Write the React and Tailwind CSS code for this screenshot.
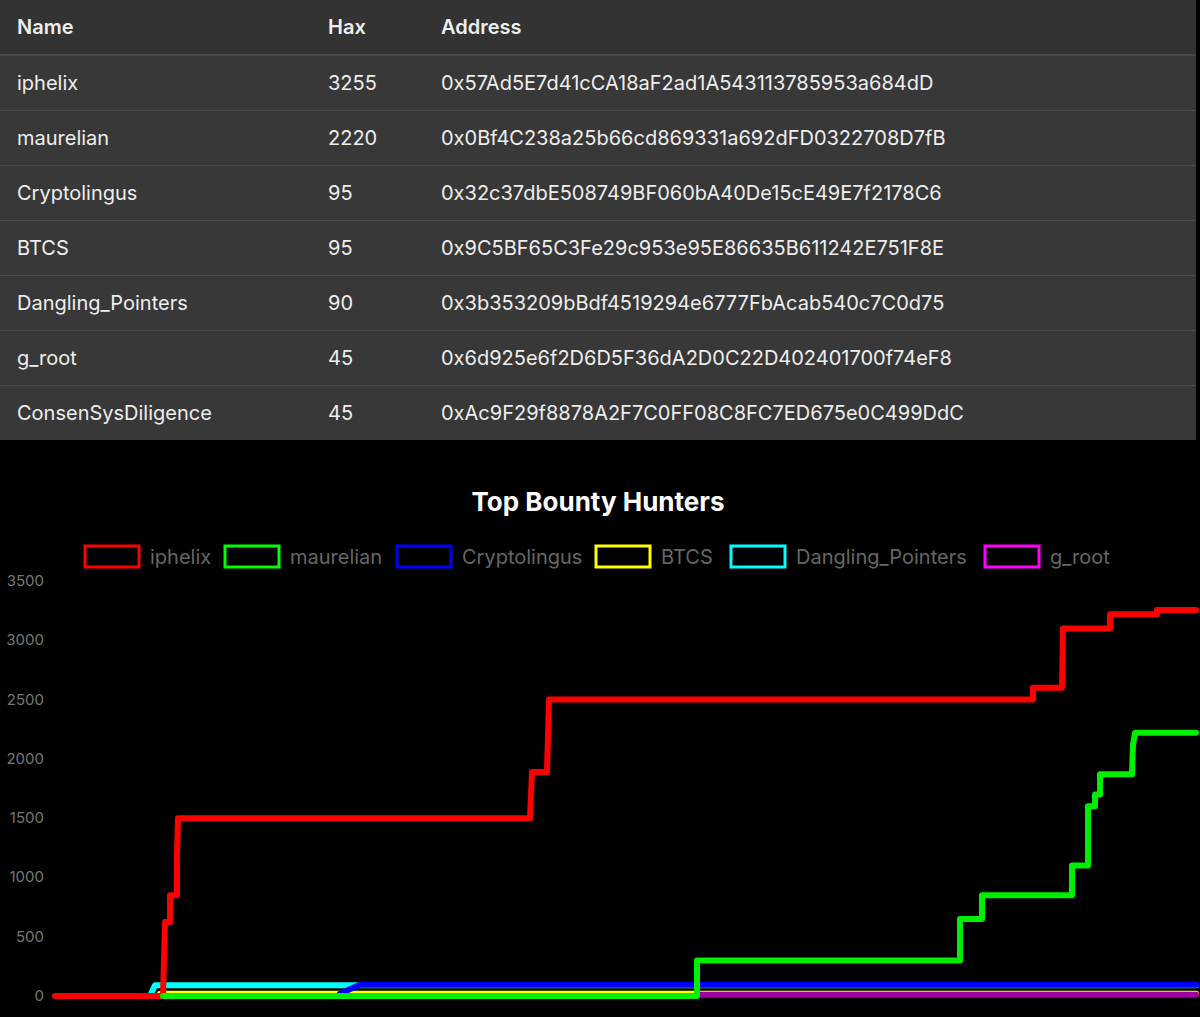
const ROWS = [
  ['iphelix', '3255', '0x57Ad5E7d41cCA18aF2ad1A543113785953a684dD'],
  ['maurelian', '2220', '0x0Bf4C238a25b66cd869331a692dFD0322708D7fB'],
  ['Cryptolingus', '95', '0x32c37dbE508749BF060bA40De15cE49E7f2178C6'],
  ['BTCS', '95', '0x9C5BF65C3Fe29c953e95E86635B611242E751F8E'],
  ['Dangling_Pointers', '90', '0x3b353209bBdf4519294e6777FbAcab540c7C0d75'],
  ['g_root', '45', '0x6d925e6f2D6D5F36dA2D0C22D402401700f74eF8'],
  ['ConsenSysDiligence', '45', '0xAc9F29f8878A2F7C0FF08C8FC7ED675e0C499DdC'],
]

const LEGEND = [
  ['iphelix', '#ff0000', 85],
  ['maurelian', '#00ff00', 225],
  ['Cryptolingus', '#0000ff', 397],
  ['BTCS', '#ffff00', 596],
  ['Dangling_Pointers', '#00ffff', 731],
  ['g_root', '#ff00ff', 985],
]

const y = v => 998 - v * 0.11857
const pts = arr => arr.map(([x, v]) => `${x},${y(v)}`).join(' ')

const SERIES = [
  ['#00ffff', [[150, 0], [155, 90], [355, 90], [1196, 90]]],
  ['#ffff00', [[160, 20], [640, 20], [1196, 20]]],
  ['#0000ff', [[340, 20], [360, 95], [1196, 95]]],
  ['#a000a0', [[697, 10], [1196, 10]]],
  ['#ff0000', [[55, 0], [163, 0], [165, 625], [170, 625], [170, 850], [177, 850], [177, 1190], [178, 1500], [530, 1500], [532, 1890], [547, 1890], [549, 2500], [1033, 2500], [1033, 2600], [1062, 2600], [1063, 3100], [1110, 3100], [1110, 3220], [1157, 3220], [1157, 3255], [1196, 3255]]],
  ['#00ee00', [[163, 0], [697, 0], [697, 300], [960, 300], [960, 650], [982, 650], [982, 850], [1072, 850], [1072, 1100], [1088, 1100], [1088, 1600], [1095, 1600], [1095, 1700], [1100, 1700], [1100, 1870], [1132, 1870], [1133, 2120], [1135, 2220], [1196, 2220]]],
]

export default function App() {
  return (
    <div className="w-[1200px] h-[1017px] bg-black overflow-hidden" style={{ fontFamily: 'Inter, "Liberation Sans", sans-serif' }}>
      <table className="w-[1196px] table-fixed bg-[#383838] text-[#eeeeee] text-[20px] border-collapse">
        <thead>
          <tr className="h-[55px] bg-[#333333] border-b-2 border-[#484848]">
            <th className="text-left font-semibold pl-[17px] w-[328px]">Name</th>
            <th className="text-left font-semibold w-[113px]">Hax</th>
            <th className="text-left font-semibold">Address</th>
          </tr>
        </thead>
        <tbody>
          {ROWS.map((r, i) => (
            <tr key={i} className={`h-[55px] ${i < ROWS.length - 1 ? 'border-b border-[#4a4a4a]' : ''}`}>
              <td className="pl-[17px]">{r[0]}</td>
              <td>{r[1]}</td>
              <td className="whitespace-nowrap">{r[2]}</td>
            </tr>
          ))}
        </tbody>
      </table>
      <svg width="1200" height="575" viewBox="0 442 1200 575" className="block">
        <text x="598" y="513" textAnchor="middle" fill="#fff" fontSize="26" fontWeight="bold">Top Bounty Hunters</text>
        {LEGEND.map(([n, c, x]) => (
          <g key={n}>
            <rect x={x} y={548} width={54} height={21} fill="none" stroke={c} strokeWidth="3" />
            <text x={x + 65} y={566} fill="#666" fontSize="20">{n}</text>
          </g>
        ))}
        {[0, 500, 1000, 1500, 2000, 2500, 3000, 3500].map(v => (
          <text key={v} x="44" y={y(v) + 5} textAnchor="end" fill="#777" fontSize="15">{v}</text>
        ))}
        {SERIES.map(([c, p], i) => (
          <polyline key={i} points={pts(p)} fill="none" stroke={c} strokeWidth="6" strokeLinejoin="round" strokeLinecap="round" />
        ))}
      </svg>
    </div>
  )
}
